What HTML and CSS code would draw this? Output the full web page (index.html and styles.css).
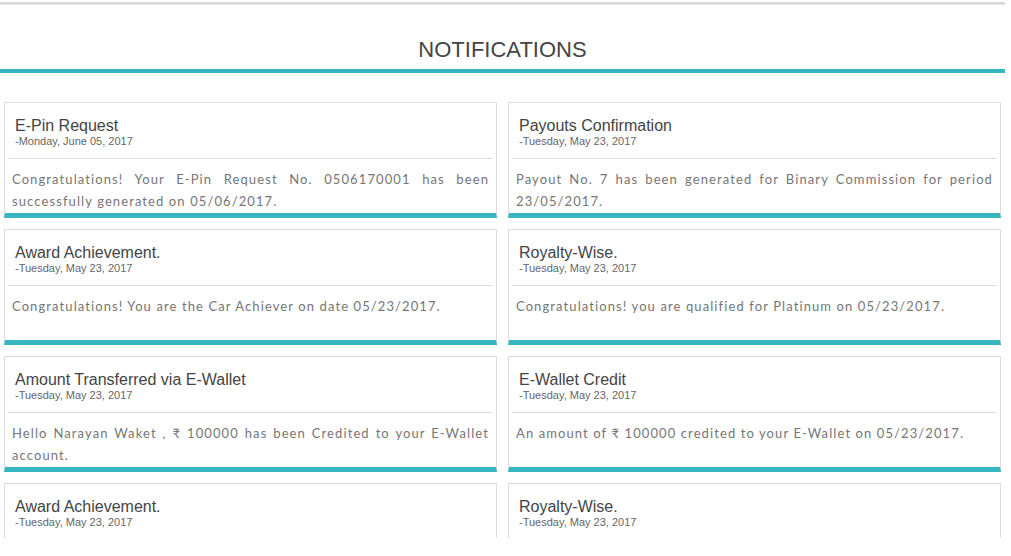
FILE: index.html
```html
<!DOCTYPE html>
<html lang="en">
<head>
<meta charset="utf-8">
<title>Notifications</title>
<link rel="stylesheet" href="styles.css">
</head>
<body>
<div class="page">
  <div class="topbar"></div>
  <h2 class="page-title">NOTIFICATIONS</h2>
  <div class="panel">
    <div class="grid">
      <div class="card">
        <div class="card-head">
          <div class="card-title">E-Pin Request</div>
          <div class="card-date">-Monday, June 05, 2017</div>
        </div>
        <div class="card-body">Congratulations! Your E-Pin Request No. 0506170001 has been successfully generated on 05/06/2017.</div>
      </div>
      <div class="card">
        <div class="card-head">
          <div class="card-title">Payouts Confirmation</div>
          <div class="card-date">-Tuesday, May 23, 2017</div>
        </div>
        <div class="card-body">Payout No. 7 has been generated for Binary Commission for period 23/05/2017.</div>
      </div>
      <div class="card">
        <div class="card-head">
          <div class="card-title">Award Achievement.</div>
          <div class="card-date">-Tuesday, May 23, 2017</div>
        </div>
        <div class="card-body">Congratulations! You are the Car Achiever on date 05/23/2017.</div>
      </div>
      <div class="card">
        <div class="card-head">
          <div class="card-title">Royalty-Wise.</div>
          <div class="card-date">-Tuesday, May 23, 2017</div>
        </div>
        <div class="card-body">Congratulations! you are qualified for Platinum on 05/23/2017.</div>
      </div>
      <div class="card">
        <div class="card-head">
          <div class="card-title">Amount Transferred via E-Wallet</div>
          <div class="card-date">-Tuesday, May 23, 2017</div>
        </div>
        <div class="card-body">Hello Narayan Waket , ₹ 100000 has been Credited to your E-Wallet account.</div>
      </div>
      <div class="card">
        <div class="card-head">
          <div class="card-title">E-Wallet Credit</div>
          <div class="card-date">-Tuesday, May 23, 2017</div>
        </div>
        <div class="card-body">An amount of ₹ 100000 credited to your E-Wallet on 05/23/2017.</div>
      </div>
      <div class="card">
        <div class="card-head">
          <div class="card-title">Award Achievement.</div>
          <div class="card-date">-Tuesday, May 23, 2017</div>
        </div>
      </div>
      <div class="card">
        <div class="card-head">
          <div class="card-title">Royalty-Wise.</div>
          <div class="card-date">-Tuesday, May 23, 2017</div>
        </div>
      </div>
    </div>
  </div>
</div>
</body>
</html>
```
FILE: styles.css
```css
html, body {
  margin: 0;
  padding: 0;
  background: #fff;
}
body {
  font-family: "Liberation Sans", Arial, sans-serif;
  color: #333;
}
.page {
  width: 1005px;
}
.topbar {
  margin-top: 2px;
  height: 3px;
  background: linear-gradient(#cfcfcf, #e6e6e6);
}
.page-title {
  margin: 0;
  padding: 32px 0 6px;
  font-size: 22px;
  line-height: 26px;
  font-weight: normal;
  color: #444;
  text-align: center;
  border-bottom: 4px solid #36b6bf;
}
.panel {
  height: 465px;
  overflow: hidden;
}
.grid {
  display: grid;
  grid-template-columns: 493px 493px;
  column-gap: 11px;
  row-gap: 11px;
  padding: 29px 4px 0;
}
.card {
  box-sizing: border-box;
  height: 116px;
  overflow: hidden;
  border: 1px solid #dcdcdc;
  border-bottom: 5px solid #36b6bf;
  background: #fff;
}
.card-head {
  margin: 0 3px;
  padding: 14px 10px 10px 7px;
  border-bottom: 1px solid #dedede;
}
.card-title {
  font-size: 16px;
  line-height: 18px;
  color: #444;
}
.card-date {
  font-size: 11px;
  line-height: 13px;
  color: #666;
}
.card-body {
  padding: 9px 7px 0;
  font-family: "Lato", "Open Sans", sans-serif;
  font-size: 13px;
  line-height: 22px;
  letter-spacing: 1.1px;
  color: #767676;
  text-align: justify;
}
```
